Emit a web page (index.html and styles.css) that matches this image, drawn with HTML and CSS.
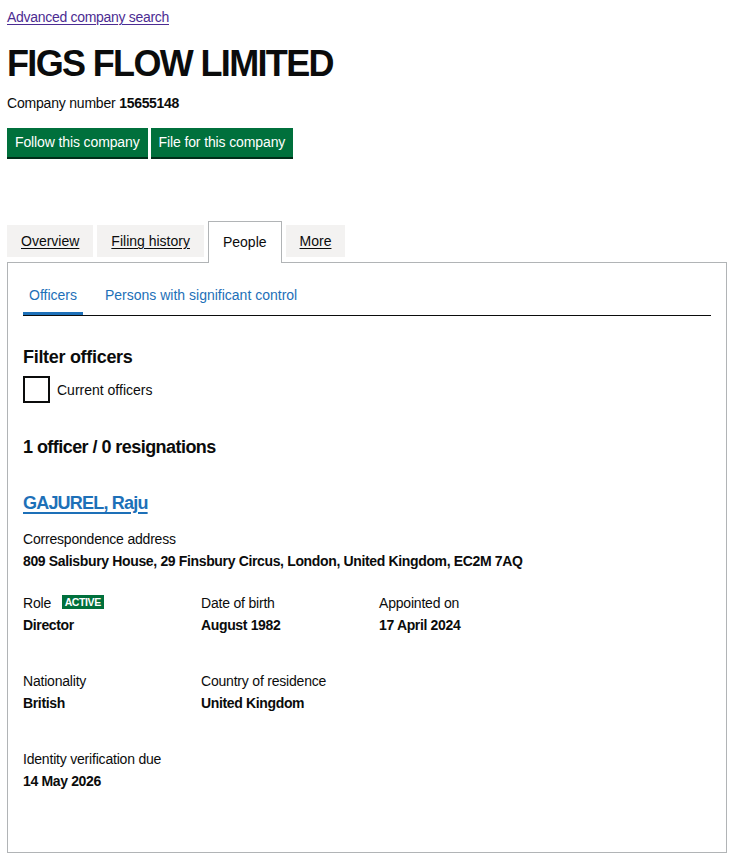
FILE: index.html
```html
<!DOCTYPE html>
<html lang="en">
<head>
<meta charset="utf-8">
<title>FIGS FLOW LIMITED - People</title>
<link rel="stylesheet" href="styles.css">
</head>
<body>
<div class="page">
  <a class="back-link" href="#">Advanced company search</a>
  <h1 class="title">FIGS FLOW LIMITED</h1>
  <p class="company-number">Company number <strong>15655148</strong></p>
  <div class="actions">
    <a class="button" href="#">Follow this company</a>
    <a class="button" href="#">File for this company</a>
  </div>

  <ul class="tabs">
    <li class="tab"><a href="#">Overview</a></li>
    <li class="tab"><a href="#">Filing history</a></li>
    <li class="tab tab-selected"><span>People</span></li>
    <li class="tab"><a href="#">More</a></li>
  </ul>

  <div class="panel">
    <ul class="subtabs">
      <li class="subtab subtab-active"><a href="#">Officers</a></li>
      <li class="subtab"><a href="#">Persons with significant control</a></li>
    </ul>

    <h2 class="filter-heading">Filter officers</h2>
    <label class="checkbox">
      <span class="checkbox-box"></span>
      <span class="checkbox-label">Current officers</span>
    </label>

    <h2 class="count-heading">1 officer / 0 resignations</h2>

    <h2 class="officer-name"><a href="#">GAJUREL, Raju</a></h2>

    <div class="field address">
      <div class="label">Correspondence address</div>
      <div class="value">809 Salisbury House, 29 Finsbury Circus, London, United Kingdom, EC2M 7AQ</div>
    </div>

    <div class="row row-first">
      <div class="field col">
        <div class="label">Role <span class="badge">Active</span></div>
        <div class="value">Director</div>
      </div>
      <div class="field col">
        <div class="label">Date of birth</div>
        <div class="value">August 1982</div>
      </div>
      <div class="field col">
        <div class="label">Appointed on</div>
        <div class="value">17 April 2024</div>
      </div>
    </div>

    <div class="row">
      <div class="field col">
        <div class="label">Nationality</div>
        <div class="value">British</div>
      </div>
      <div class="field col">
        <div class="label">Country of residence</div>
        <div class="value">United Kingdom</div>
      </div>
    </div>

    <div class="row">
      <div class="field col">
        <div class="label">Identity verification due</div>
        <div class="value">14 May 2026</div>
      </div>
    </div>
  </div>
</div>
</body>
</html>
```

FILE: styles.css
```css
* { box-sizing: border-box; }

body {
  margin: 0;
  background: #ffffff;
  color: #0b0c0c;
  font-family: "Liberation Sans", Arial, sans-serif;
  font-size: 14px;
  line-height: 20px;
  letter-spacing: -0.2px;
}

.page {
  padding: 7px 15px 0 7px;
}

.back-link {
  display: inline-block;
  color: #4c2c92;
  text-decoration: underline;
  text-underline-offset: 2px;
  line-height: 20px;
  letter-spacing: -0.3px;
}

.title {
  margin: 17px 0 0;
  font-size: 36px;
  line-height: 40px;
  font-weight: 700;
  letter-spacing: -1.65px;
}

.company-number {
  margin: 9px 0 0;
}

.company-number strong {
  letter-spacing: -0.3px;
}

.actions {
  display: flex;
  gap: 3px;
  margin-top: 15px;
}

.button {
  display: inline-block;
  height: 29px;
  padding: 0 8px;
  line-height: 29px;
  background: #00703c;
  color: #ffffff;
  text-decoration: none;
  letter-spacing: -0.12px;
  box-shadow: 0 2px 0 #002d18;
}

.tabs {
  display: flex;
  align-items: flex-start;
  gap: 4px;
  list-style: none;
  margin: 64px 0 0;
  padding: 0;
  height: 41px;
  letter-spacing: 0;
}

.tab {
  margin-top: 4px;
  height: 32px;
  padding: 0 14px;
  line-height: 32px;
  background: #f3f2f1;
}

.tab a {
  color: #0b0c0c;
  text-decoration: underline;
  text-underline-offset: 2px;
}

.tab-selected {
  position: relative;
  z-index: 1;
  margin-top: 0;
  height: 42px;
  padding: 0 14px;
  line-height: 40px;
  background: #ffffff;
  border: 1px solid #b1b4b6;
  border-bottom: 0;
}

.panel {
  border: 1px solid #b1b4b6;
  padding: 15px 15px 60px;
  height: 591px;
}

.subtabs {
  display: flex;
  gap: 16px;
  list-style: none;
  margin: 0;
  padding: 0;
  border-bottom: 1px solid #0b0c0c;
  letter-spacing: 0;
}

.subtab {
  padding: 7px 6px 0;
  height: 37px;
  border-bottom: 3px solid transparent;
}

.subtab a {
  color: #1d70b8;
  text-decoration: none;
}

.subtab-active {
  border-bottom-color: #1d70b8;
}

.filter-heading,
.count-heading,
.officer-name {
  font-size: 18px;
  line-height: 25px;
  font-weight: 700;
  letter-spacing: -0.3px;
  margin: 0;
}

.count-heading { letter-spacing: -0.55px; margin-top: 32px; }

.filter-heading { margin-top: 29px; }

.checkbox {
  display: flex;
  align-items: center;
  gap: 7px;
  margin-top: 6px;
  letter-spacing: 0;
}

.checkbox-box {
  width: 27px;
  height: 27px;
  border: 2px solid #0b0c0c;
}

.officer-name {
  margin-top: 31px;
  letter-spacing: -0.8px;
}

.officer-name a {
  color: #1d70b8;
  text-decoration: underline;
  text-underline-offset: 3px;
  text-decoration-thickness: 2px;
}

.field .value {
  font-weight: 700;
  margin-top: 2px;
  letter-spacing: -0.35px;
}

.address { margin-top: 13px; }

.row {
  display: flex;
  margin-top: 36px;
}

.row-first { margin-top: 22px; }

.col { width: 178px; }

.badge {
  display: inline-block;
  margin-left: 7px;
  padding: 0 3px;
  height: 14px;
  line-height: 14px;
  vertical-align: 2px;
  background: #00703c;
  color: #ffffff;
  font-size: 10.5px;
  font-weight: 700;
  text-transform: uppercase;
  letter-spacing: -0.4px;
}
```
